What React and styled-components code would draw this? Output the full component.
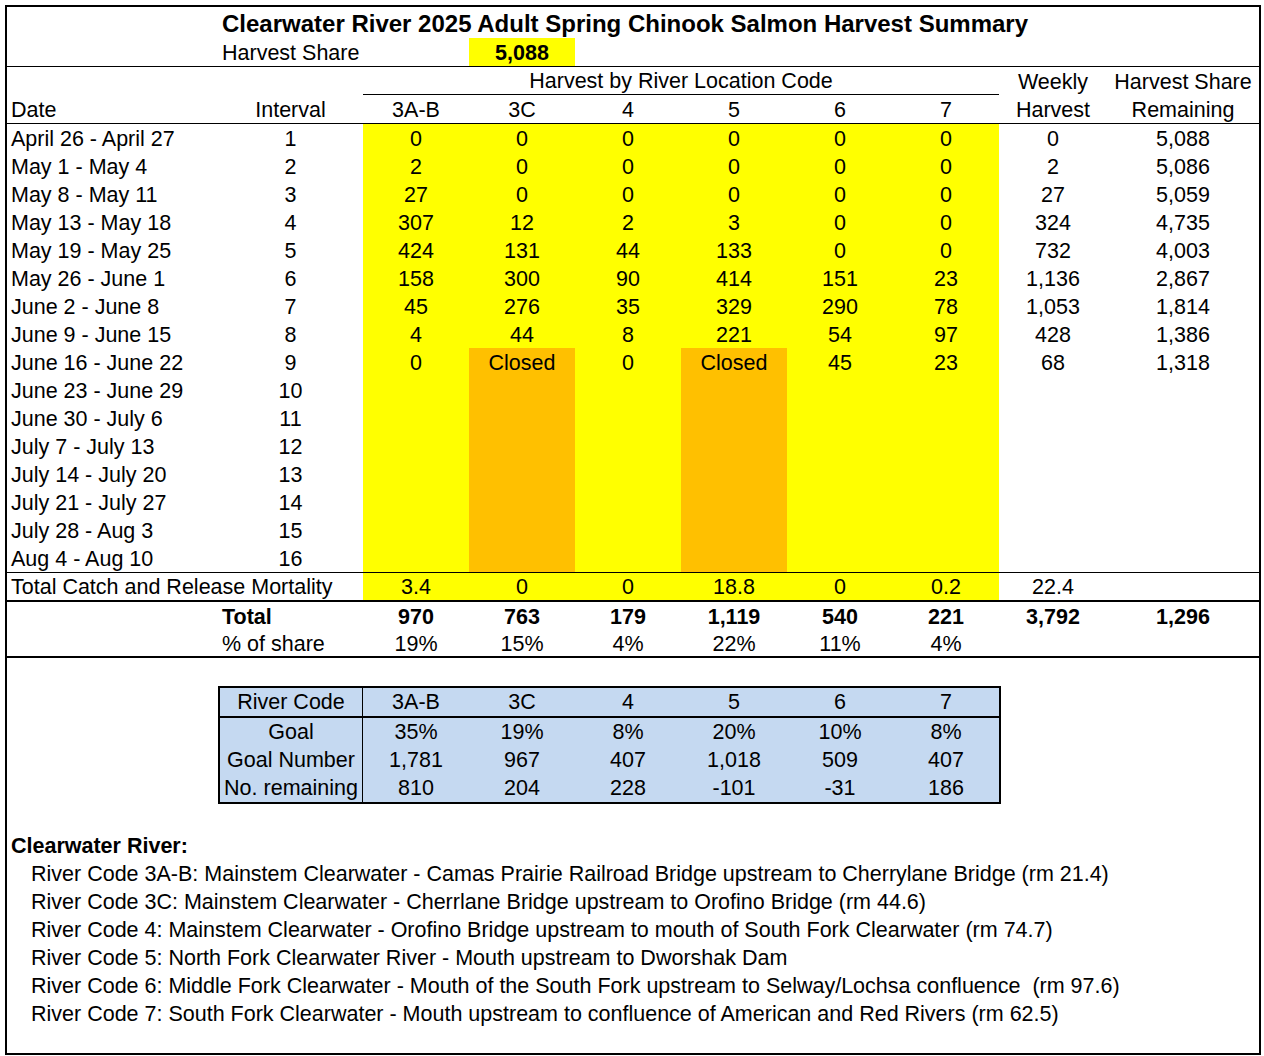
import styled, { createGlobalStyle } from "styled-components";

const GlobalStyle = createGlobalStyle`
  body {
    margin: 0;
    background: #ffffff;
    font-family: "Liberation Sans", Arial, sans-serif;
    color: #000000;
  }
`;

const COLS = "211px 145px repeat(6, 106px) 108px 152px";
const YELLOW = "#ffff00";
const ORANGE = "#ffc000";
const BLUE = "#c5d9f1";

const Sheet = styled.div`
  margin: 5px 0 0 5px;
  width: 1256px;
  height: 1050px;
  box-sizing: border-box;
  border: 2px solid #000;
  font-size: 21.5px;
  line-height: 1;
`;

const TitleRow = styled.div`
  height: 31px;
  box-sizing: border-box;
  padding: 3px 16px 0 0;
  display: flex;
  align-items: center;
  justify-content: center;
  font-weight: bold;
  font-size: 24px;
`;

const Row = styled.div`
  display: grid;
  grid-template-columns: ${COLS};
  box-sizing: border-box;
  height: ${(p) => p.$h || 28}px;
  border-top: ${(p) => p.$top || "none"};
  border-bottom: ${(p) => p.$bottom || "none"};
`;

const Cell = styled.div`
  display: flex;
  align-items: center;
  justify-content: ${(p) => (p.$left ? "flex-start" : "center")};
  padding: 3px 0 0 ${(p) => (p.$left ? "4px" : "0")};
  background: ${(p) => p.$bg || "transparent"};
  font-weight: ${(p) => (p.$bold ? "bold" : "normal")};
  grid-column: ${(p) => p.$span || "auto"};
  border-bottom: ${(p) => (p.$under ? "1px solid #000" : "none")};
  box-sizing: border-box;
  white-space: nowrap;
`;

const Spacer = styled.div`
  height: ${(p) => p.$h}px;
`;

const GoalTable = styled.div`
  margin-left: 211px;
  width: 779px;
  border: 2px solid #000;
  background: ${BLUE};
`;

const GoalRow = styled.div`
  display: grid;
  grid-template-columns: 143px repeat(6, 106px);
  height: ${(p) => p.$h || 28}px;
  box-sizing: border-box;
  border-bottom: ${(p) => (p.$head ? "2px solid #000" : "none")};
`;

const GoalCell = styled.div`
  display: flex;
  align-items: center;
  justify-content: center;
  padding-top: 2px;
  box-sizing: border-box;
  border-right: ${(p) => (p.$first ? "1px solid #000" : "none")};
`;

const Notes = styled.div`
  padding-left: 4px;
`;

const NoteHead = styled.div`
  height: 28px;
  display: flex;
  align-items: center;
  font-weight: bold;
`;

const NoteLine = styled.div`
  height: 28px;
  display: flex;
  align-items: center;
  padding-left: 20px;
  white-space: pre;
`;

const weeks = [
  ["April 26 - April 27", [0, 0, 0, 0, 0, 0], "0", "5,088"],
  ["May 1 - May 4", [2, 0, 0, 0, 0, 0], "2", "5,086"],
  ["May 8 - May 11", [27, 0, 0, 0, 0, 0], "27", "5,059"],
  ["May 13 - May 18", [307, 12, 2, 3, 0, 0], "324", "4,735"],
  ["May 19 - May 25", [424, 131, 44, 133, 0, 0], "732", "4,003"],
  ["May 26 - June 1", [158, 300, 90, 414, 151, 23], "1,136", "2,867"],
  ["June 2 - June 8", [45, 276, 35, 329, 290, 78], "1,053", "1,814"],
  ["June 9 - June 15", [4, 44, 8, 221, 54, 97], "428", "1,386"],
  ["June 16 - June 22", [0, "Closed", 0, "Closed", 45, 23], "68", "1,318"],
  ["June 23 - June 29"],
  ["June 30 - July 6"],
  ["July 7 - July 13"],
  ["July 14 - July 20"],
  ["July 21 - July 27"],
  ["July 28 - Aug 3"],
  ["Aug 4 - Aug 10"],
];

const codes = ["3A-B", "3C", "4", "5", "6", "7"];
const mortality = ["3.4", "0", "0", "18.8", "0", "0.2"];
const totals = ["970", "763", "179", "1,119", "540", "221"];
const shares = ["19%", "15%", "4%", "22%", "11%", "4%"];

const goals = [
  ["Goal", "35%", "19%", "8%", "20%", "10%", "8%"],
  ["Goal Number", "1,781", "967", "407", "1,018", "509", "407"],
  ["No. remaining", "810", "204", "228", "-101", "-31", "186"],
];

const notes = [
  "River Code 3A-B: Mainstem Clearwater - Camas Prairie Railroad Bridge upstream to Cherrylane Bridge (rm 21.4)",
  "River Code 3C: Mainstem Clearwater - Cherrlane Bridge upstream to Orofino Bridge (rm 44.6)",
  "River Code 4: Mainstem Clearwater - Orofino Bridge upstream to mouth of South Fork Clearwater (rm 74.7)",
  "River Code 5: North Fork Clearwater River - Mouth upstream to Dworshak Dam",
  "River Code 6: Middle Fork Clearwater - Mouth of the South Fork upstream to Selway/Lochsa confluence  (rm 97.6)",
  "River Code 7: South Fork Clearwater - Mouth upstream to confluence of American and Red Rivers (rm 62.5)",
];

// 3C and 5 closed from interval 9 on
const cellColor = (week, col) =>
  week >= 8 && (col === 1 || col === 3) ? ORANGE : YELLOW;

export default function App() {
  return (
    <>
      <GlobalStyle />
      <Sheet>
        <TitleRow>Clearwater River 2025 Adult Spring Chinook Salmon Harvest Summary</TitleRow>
        <Row $h={29} $bottom="1px solid #000">
          <Cell />
          <Cell $left>Harvest Share</Cell>
          <Cell />
          <Cell $bg={YELLOW} $bold>5,088</Cell>
        </Row>

        <Row>
          <Cell />
          <Cell />
          <Cell $span="3 / 9" $under>Harvest by River Location Code</Cell>
          <Cell>Weekly</Cell>
          <Cell>Harvest Share</Cell>
        </Row>
        <Row $h={29} $bottom="1px solid #000">
          <Cell $left>Date</Cell>
          <Cell>Interval</Cell>
          {codes.map((c) => (
            <Cell key={c}>{c}</Cell>
          ))}
          <Cell>Harvest</Cell>
          <Cell>Remaining</Cell>
        </Row>

        {weeks.map(([date, vals, weekly, remaining], i) => (
          <Row key={date}>
            <Cell $left>{date}</Cell>
            <Cell>{i + 1}</Cell>
            {codes.map((c, j) => (
              <Cell key={c} $bg={cellColor(i, j)}>
                {vals ? vals[j] : ""}
              </Cell>
            ))}
            <Cell>{weekly}</Cell>
            <Cell>{remaining}</Cell>
          </Row>
        ))}

        <Row $h={30} $top="1px solid #000" $bottom="2px solid #000">
          <Cell $left $span="1 / 3">Total Catch and Release Mortality</Cell>
          {mortality.map((m, j) => (
            <Cell key={j} $bg={YELLOW}>{m}</Cell>
          ))}
          <Cell>22.4</Cell>
          <Cell />
        </Row>
        <Row>
          <Cell />
          <Cell $left $bold>Total</Cell>
          {totals.map((t, j) => (
            <Cell key={j} $bold>{t}</Cell>
          ))}
          <Cell $bold>3,792</Cell>
          <Cell $bold>1,296</Cell>
        </Row>
        <Row $h={28} $bottom="2px solid #000">
          <Cell />
          <Cell $left>% of share</Cell>
          {shares.map((s, j) => (
            <Cell key={j}>{s}</Cell>
          ))}
        </Row>

        <Spacer $h={28} />
        <GoalTable>
          <GoalRow $h={30} $head>
            <GoalCell $first>River Code</GoalCell>
            {codes.map((c) => (
              <GoalCell key={c}>{c}</GoalCell>
            ))}
          </GoalRow>
          {goals.map((g) => (
            <GoalRow key={g[0]}>
              {g.map((v, k) => (
                <GoalCell key={k} $first={k === 0}>{v}</GoalCell>
              ))}
            </GoalRow>
          ))}
        </GoalTable>

        <Spacer $h={29} />
        <Notes>
          <NoteHead>Clearwater River:</NoteHead>
          {notes.map((n) => (
            <NoteLine key={n}>{n}</NoteLine>
          ))}
        </Notes>
      </Sheet>
    </>
  );
}
